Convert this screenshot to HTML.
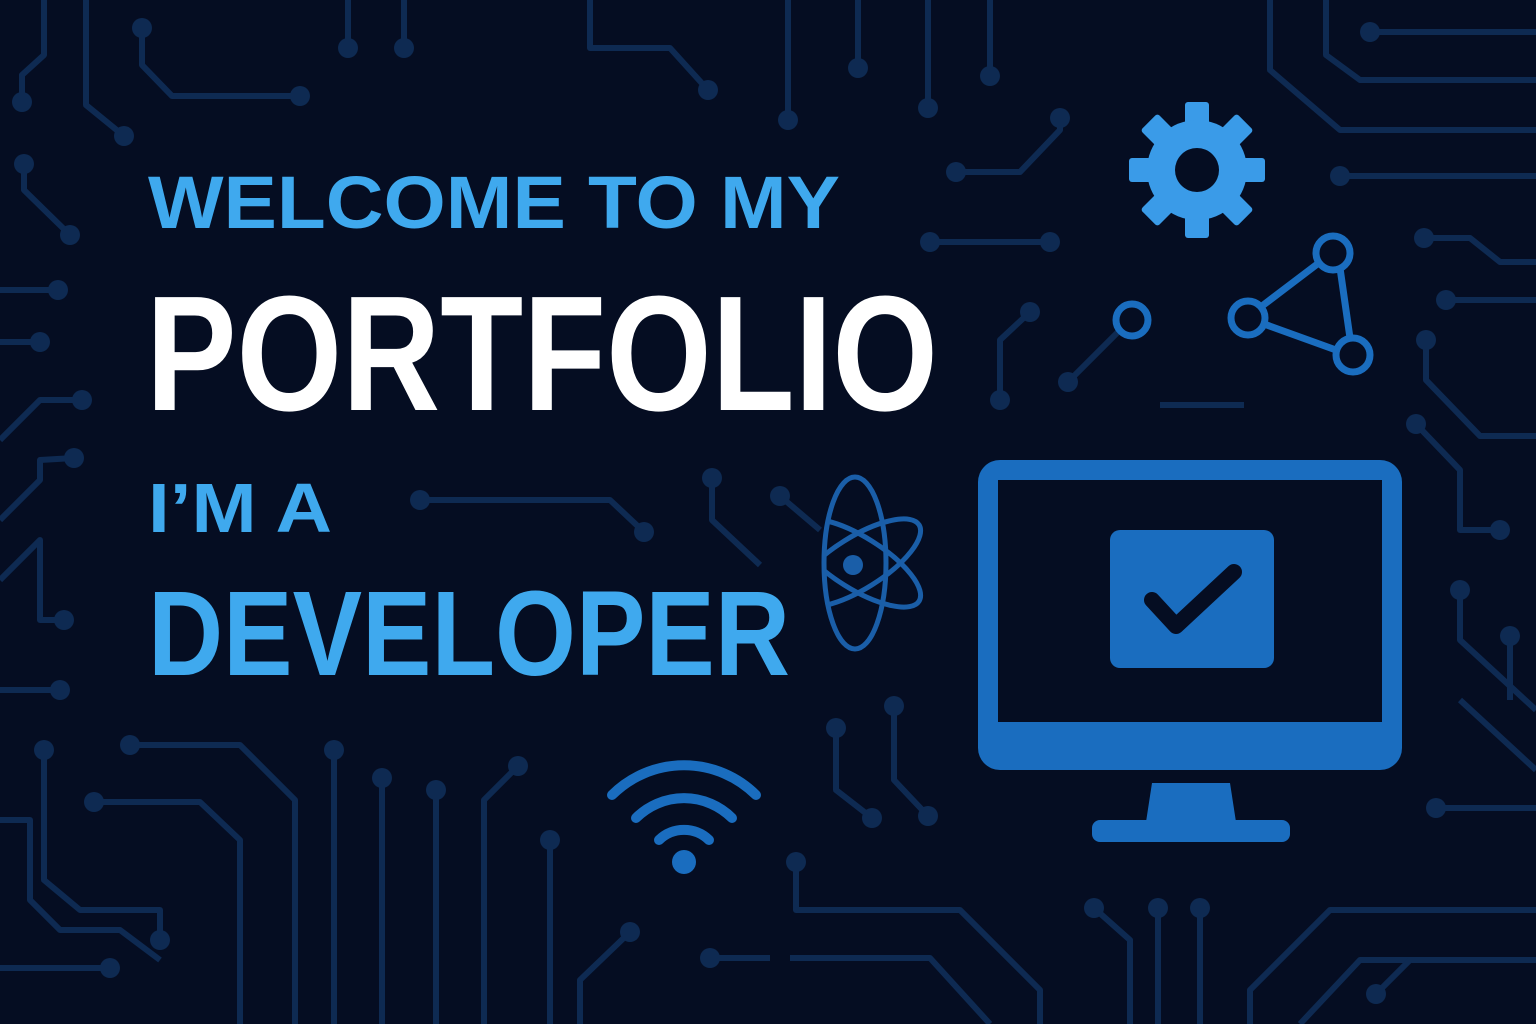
<!DOCTYPE html>
<html><head><meta charset="utf-8"><style>
html,body{margin:0;padding:0;background:#050d22;}
svg{display:block}
text{font-family:"Liberation Sans",sans-serif;font-weight:bold}
</style></head><body>
<svg width="1536" height="1024" viewBox="0 0 1536 1024" xmlns="http://www.w3.org/2000/svg">
<defs><clipPath id="ac"><rect x="826" y="460" width="120" height="200"/></clipPath></defs>
<rect width="1536" height="1024" fill="#050d22"/>
<g fill="none" stroke="#0e2a52" stroke-width="6" stroke-linejoin="round">
<path d="M44 0V55L22 75V102"/><path d="M86 0V105L124 136"/><path d="M142 28V65L172 96H300"/>
<path d="M348 0V48"/><path d="M404 0V48"/><path d="M24 164V190L70 235"/><path d="M0 290H58"/><path d="M0 342H40"/>
<path d="M0 440L40 400H82"/><path d="M0 520L40 480V460L74 458"/><path d="M0 580L40 540V620H64"/><path d="M0 690H60"/>
<path d="M590 0V48H670L708 90"/><path d="M788 0V120"/><path d="M858 0V68"/><path d="M928 0V108"/><path d="M990 0V76"/>
<path d="M956 172H1020L1060 130V118"/><path d="M930 242H1050"/><path d="M1068 382L1120 330"/><path d="M1000 400V340L1030 312"/>
<path d="M1160 405H1244"/><path d="M1270 0V70L1340 130H1536"/><path d="M1326 0V55L1360 80H1536"/><path d="M1370 32H1536"/>
<path d="M1340 176H1536"/><path d="M1424 238H1470L1500 262H1536"/><path d="M1446 300H1536"/><path d="M1426 340V380L1480 436H1536"/>
<path d="M1416 424L1460 470V530H1500"/><path d="M1460 590V640L1536 710"/><path d="M1510 636V700"/><path d="M1460 700L1536 770"/><path d="M1436 808H1536"/>
<path d="M420 500H610L644 532"/><path d="M712 478V520L760 565"/><path d="M780 496L820 530"/>
<path d="M44 750V880L80 910H160V940"/><path d="M94 802H200L240 840V1024"/><path d="M130 745H240L295 800V1024"/>
<path d="M0 820H30V900L60 930H120L160 960"/><path d="M0 968H110"/><path d="M334 750V1024"/><path d="M382 778V1024"/><path d="M436 790V1024"/>
<path d="M518 766L484 800V1024"/><path d="M550 840V1024"/><path d="M630 932L580 980V1024"/><path d="M710 958H770"/><path d="M790 958H930L990 1024"/>
<path d="M836 728V790L872 818"/><path d="M894 706V780L928 816"/><path d="M796 862V910H960L1040 990V1024"/>
<path d="M1094 908L1130 940V1024"/><path d="M1158 908V1024"/><path d="M1200 908V1024"/><path d="M1250 1024V990L1330 910H1536"/>
<path d="M1300 1024L1360 960H1536"/><path d="M1376 994L1410 960"/>
</g>
<g fill="#0e2a52">
<circle cx="22" cy="102" r="10"/><circle cx="124" cy="136" r="10"/><circle cx="142" cy="28" r="10"/><circle cx="300" cy="96" r="10"/>
<circle cx="348" cy="48" r="10"/><circle cx="404" cy="48" r="10"/><circle cx="24" cy="164" r="10"/><circle cx="70" cy="235" r="10"/>
<circle cx="58" cy="290" r="10"/><circle cx="40" cy="342" r="10"/><circle cx="82" cy="400" r="10"/><circle cx="74" cy="458" r="10"/>
<circle cx="64" cy="620" r="10"/><circle cx="60" cy="690" r="10"/><circle cx="708" cy="90" r="10"/><circle cx="788" cy="120" r="10"/>
<circle cx="858" cy="68" r="10"/><circle cx="928" cy="108" r="10"/><circle cx="990" cy="76" r="10"/><circle cx="956" cy="172" r="10"/>
<circle cx="1060" cy="118" r="10"/><circle cx="930" cy="242" r="10"/><circle cx="1050" cy="242" r="10"/><circle cx="1068" cy="382" r="10"/>
<circle cx="1000" cy="400" r="10"/><circle cx="1030" cy="312" r="10"/><circle cx="1370" cy="32" r="10"/><circle cx="1340" cy="176" r="10"/>
<circle cx="1424" cy="238" r="10"/><circle cx="1446" cy="300" r="10"/><circle cx="1426" cy="340" r="10"/><circle cx="1416" cy="424" r="10"/>
<circle cx="1500" cy="530" r="10"/><circle cx="1460" cy="590" r="10"/><circle cx="1510" cy="636" r="10"/><circle cx="1436" cy="808" r="10"/>
<circle cx="420" cy="500" r="10"/><circle cx="644" cy="532" r="10"/><circle cx="712" cy="478" r="10"/><circle cx="780" cy="496" r="10"/>
<circle cx="44" cy="750" r="10"/><circle cx="160" cy="940" r="10"/><circle cx="94" cy="802" r="10"/><circle cx="130" cy="745" r="10"/>
<circle cx="110" cy="968" r="10"/><circle cx="334" cy="750" r="10"/><circle cx="382" cy="778" r="10"/><circle cx="436" cy="790" r="10"/>
<circle cx="518" cy="766" r="10"/><circle cx="550" cy="840" r="10"/><circle cx="630" cy="932" r="10"/><circle cx="710" cy="958" r="10"/>
<circle cx="836" cy="728" r="10"/><circle cx="894" cy="706" r="10"/><circle cx="872" cy="818" r="10"/><circle cx="928" cy="816" r="10"/>
<circle cx="796" cy="862" r="10"/><circle cx="1094" cy="908" r="10"/><circle cx="1158" cy="908" r="10"/><circle cx="1200" cy="908" r="10"/>
<circle cx="1376" cy="994" r="10"/>
</g>
<!-- text -->
<text x="148" y="228" font-size="74" fill="#3fa9ee" textLength="692" lengthAdjust="spacingAndGlyphs">WELCOME TO MY</text>
<text x="146" y="410" font-size="164" fill="#ffffff" textLength="792" lengthAdjust="spacingAndGlyphs">PORTFOLIO</text>
<text x="148" y="532" font-size="70" fill="#3fa9ee" textLength="184" lengthAdjust="spacingAndGlyphs">I’M A</text>
<text x="148" y="675" font-size="121" fill="#3fa9ee" textLength="642" lengthAdjust="spacingAndGlyphs">DEVELOPER</text>
<!-- gear -->
<g transform="translate(1197 170)" fill="#3a9be8">
<g id="t"><rect x="-12" y="-68" width="24" height="30" rx="3"/></g>
<use href="#t" transform="rotate(45)"/><use href="#t" transform="rotate(90)"/><use href="#t" transform="rotate(135)"/>
<use href="#t" transform="rotate(180)"/><use href="#t" transform="rotate(225)"/><use href="#t" transform="rotate(270)"/><use href="#t" transform="rotate(315)"/>
<circle r="50"/><circle r="22" fill="#050d22"/>
</g>
<!-- triangle network -->
<g fill="none" stroke="#1a6dbf" stroke-width="7">
<path d="M1262 306L1320 262M1340 268L1350 338M1264 324L1336 350"/>
<circle cx="1333" cy="253" r="17"/><circle cx="1248" cy="318" r="17"/><circle cx="1353" cy="355" r="17"/>
<circle cx="1132" cy="320" r="16"/>
</g>
<!-- atom -->
<g fill="none" stroke="#1a5ea8" stroke-width="5">
<ellipse cx="855" cy="563" rx="31" ry="86"/>
<g clip-path="url(#ac)">
<ellipse cx="858" cy="563" rx="72" ry="26" transform="rotate(32 858 563)"/>
<ellipse cx="858" cy="563" rx="72" ry="26" transform="rotate(-32 858 563)"/>
</g>
<circle cx="853" cy="565" r="10" fill="#1a5ea8" stroke="none"/>
</g>
<!-- wifi -->
<g fill="none" stroke="#1a6dbf" stroke-width="10" stroke-linecap="round">
<path d="M612 795A102 102 0 0 1 756 795"/><path d="M636 818A68 68 0 0 1 732 818"/><path d="M659 840A36 36 0 0 1 709 840"/>
</g>
<circle cx="684" cy="862" r="12" fill="#1a6dbf"/>
<!-- monitor -->
<rect x="978" y="460" width="424" height="310" rx="22" fill="#1a6dbf"/>
<rect x="998" y="480" width="384" height="242" fill="#050d22"/>
<path d="M1152 783H1230L1236 822H1146Z" fill="#1a6dbf"/>
<rect x="1092" y="820" width="198" height="22" rx="8" fill="#1a6dbf"/>
<rect x="1110" y="530" width="164" height="138" rx="10" fill="#1a6dbf"/>
<path d="M1152 600L1176 626L1234 572" fill="none" stroke="#050d22" stroke-width="16" stroke-linecap="round" stroke-linejoin="round"/>
</svg>
</body></html>
